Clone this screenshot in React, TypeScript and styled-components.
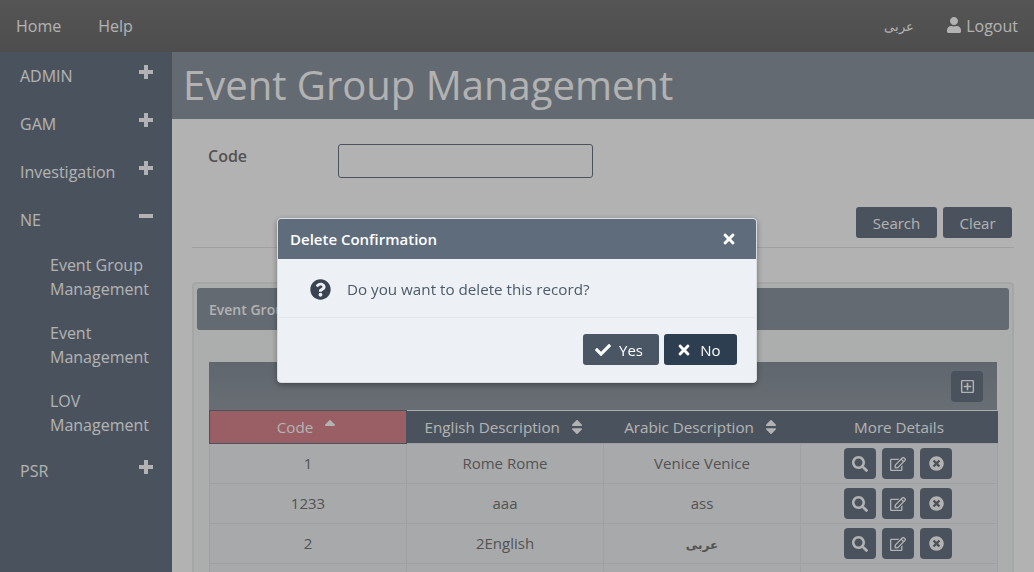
import styled, { createGlobalStyle } from 'styled-components';
import {
  FaCheck,
  FaQuestionCircle,
  FaRegEdit,
  FaRegPlusSquare,
  FaSearch,
  FaSort,
  FaSortUp,
  FaTimes,
  FaTimesCircle,
  FaUser,
} from 'react-icons/fa';

const GlobalStyle = createGlobalStyle`
  html, body {
    margin: 0;
    height: 572px;
    overflow: hidden;
    background: #fff;
    font-family: "Open Sans", "Noto Sans", sans-serif;
  }
  * { box-sizing: border-box; }
`;

const Page = styled.div`
  width: 1034px;
  height: 572px;
  overflow: hidden;
  display: flex;
  flex-direction: column;
`;

// Top bar
//
const TopBar = styled.header`
  flex: none;
  height: 52px;
  display: flex;
  align-items: center;
  justify-content: space-between;
  padding: 0 16px;
  background: linear-gradient(#7a7a7a, #6f6f6f);
  color: #fff;
  font-size: 16px;
`;

const TopGroup = styled.nav<{ $gap: number }>`
  display: flex;
  align-items: center;
  gap: ${({ $gap }) => $gap}px;
`;

const ArabicLink = styled.span`
  font-family: "DejaVu Sans", sans-serif;
  font-size: 13px;
  font-weight: 300;
`;

const LogoutLink = styled.span`
  display: flex;
  align-items: center;
  gap: 4px;
  svg { font-size: 16px; margin-bottom: 3px; }
`;

const Body = styled.div`
  flex: 1;
  display: flex;
  min-height: 0;
`;

// Sidebar
//
const Sidebar = styled.aside`
  flex: none;
  width: 172px;
  background: #6b7786;
  color: #fff;
  font-size: 16px;
`;

const MenuItem = styled.div`
  height: 48px;
  display: flex;
  align-items: center;
  justify-content: space-between;
  padding: 0 19px 0 20px;
  svg { width: 14px; height: 14px; margin-bottom: 8px; }
`;

const SubMenu = styled.div`
  padding: 9px 0 10px 50px;
  display: flex;
  flex-direction: column;
  gap: 20px;
  line-height: 24px;
`;

const PlusIcon = () => (
  <svg viewBox="0 0 14 14" fill="currentColor">
    <path d="M5 0h4v5h5v4H9v5H5V9H0V5h5z" />
  </svg>
);

const MinusIcon = () => (
  <svg viewBox="0 0 14 14" fill="currentColor">
    <path d="M0 5h14v4H0z" />
  </svg>
);

// Main content
//
const Main = styled.main`
  flex: 1;
  min-width: 0;
  display: flex;
  flex-direction: column;
`;

const TitleBar = styled.h1`
  flex: none;
  margin: 0;
  height: 67px;
  padding: 0 0 2px 11px;
  display: flex;
  align-items: center;
  background: #8f99a4;
  color: #fff;
  font-size: 40px;
  font-weight: 400;
`;

const Content = styled.div`
  padding: 25px 20px 0;
  color: #777;
`;

const FormRow = styled.div`
  display: flex;
  align-items: flex-start;
  height: 63px;
  padding-left: 16px;
`;

const FieldLabel = styled.label`
  width: 130px;
  padding-top: 1px;
  font-size: 16px;
  font-weight: 600;
  line-height: 22px;
`;

const TextInput = styled.input`
  width: 255px;
  height: 34px;
  background: #fff;
  border: 1px solid #6b7786;
  border-radius: 3px;
`;

const ActionRow = styled.div`
  display: flex;
  justify-content: flex-end;
  gap: 6px;
  padding: 0 2px 9px 0;
  border-bottom: 1px solid #e6e6e6;
`;

const ActionButton = styled.button<{ $width: number }>`
  width: ${({ $width }) => $width}px;
  height: 31px;
  padding: 0;
  border: 0;
  border-radius: 3px;
  background: #6b7786;
  color: #fff;
  font: 400 15px "Open Sans", sans-serif;
`;

const Panel = styled.section`
  margin-top: 34px;
  padding: 4px 3px 0;
  height: 300px;
  background: #f7f8f8;
  border: 2px solid #eeeeee;
  border-radius: 4px;
`;

const PanelHeader = styled.div`
  height: 42px;
  display: flex;
  align-items: center;
  padding-left: 12px;
  border-radius: 3px;
  background: #8f99a4;
  color: #fff;
  font-size: 14px;
  font-weight: 600;
`;

const TableWrap = styled.div`
  margin: 32px 12px 0;
`;

const TableCaption = styled.div`
  height: 48px;
  display: flex;
  align-items: center;
  justify-content: flex-end;
  padding-right: 14px;
  background: linear-gradient(#8a939d, #969ea7);
`;

const IconButton = styled.button<{ $size: number }>`
  width: 32px;
  height: 31px;
  padding: 0;
  display: inline-flex;
  align-items: center;
  justify-content: center;
  border: 0;
  border-radius: 4px;
  background: #6b7786;
  color: #fff;
  font-size: ${({ $size }) => $size}px;
`;

const StyledTable = styled.table`
  width: 789px;
  table-layout: fixed;
  border-collapse: collapse;
`;

const HeaderCell = styled.th<{ $sorted?: boolean }>`
  height: 33px;
  padding: 0;
  background: ${({ $sorted }) => ($sorted ? '#dc8890' : '#6b7786')};
  border: ${({ $sorted }) => ($sorted ? '1px solid #6b7786' : '0')};
  color: #fff;
  font-size: 15.2px;
  font-weight: 400;
  svg { font-size: 18px; margin-left: 8px; vertical-align: -3px; }
`;

const Cell = styled.td`
  height: 40px;
  padding: 0 0 2px;
  background: #f1f3f5;
  border: 1px solid #e4e6e8;
  color: #777;
  font-size: 15px;
  text-align: center;
`;

const ActionCell = styled(Cell)`
  padding: 0;
`;

const ArabicCell = styled.span`
  font-family: "DejaVu Sans", sans-serif;
  font-size: 12px;
  font-weight: 700;
`;

const RowActions = styled.div`
  display: flex;
  justify-content: center;
  gap: 6px;
  padding-right: 2px;
`;

// Delete dialog
//
const Overlay = styled.div`
  position: fixed;
  inset: 0;
  background: rgba(0, 0, 0, 0.3);
  display: flex;
  justify-content: center;
  align-items: flex-start;
  padding-top: 218px;
`;

const Dialog = styled.div`
  width: 480px;
  height: 165px;
  padding: 1px;
  background: #edf0f4;
  border-radius: 4px;
  border: 1px solid #d8dde2;
  box-shadow: 0 2px 6px rgba(0, 0, 0, 0.35);
  overflow: hidden;
`;

const DialogHeader = styled.div`
  height: 40px;
  margin: -1px -1px 0;
  display: flex;
  align-items: center;
  justify-content: space-between;
  padding: 0 19px 0 12px;
  background: #5f6c7b;
  color: #fff;
  font-size: 15px;
  font-weight: 600;
  svg { font-size: 16px; }
`;

const DialogBody = styled.div`
  height: 59px;
  display: flex;
  align-items: center;
  gap: 16px;
  padding: 2px 0 0 31px;
  border-bottom: 1px solid #e3e6ea;
  color: #4d5a69;
  font-size: 15.2px;
  svg { font-size: 21px; color: #3a4350; }
`;

const DialogFooter = styled.div`
  display: flex;
  justify-content: flex-end;
  gap: 5px;
  padding: 16px 18px 0 0;
`;

const DialogButton = styled.button<{ $dark?: boolean; $width: number }>`
  width: ${({ $width }) => $width}px;
  height: 31px;
  padding: 0 4px 0 0;
  display: flex;
  align-items: center;
  justify-content: center;
  gap: 8px;
  border: 0;
  border-radius: 3px;
  background: ${({ $dark }) => ($dark ? '#2c3e50' : '#4a5664')};
  color: #fff;
  font: 400 15px "Open Sans", sans-serif;
  svg { font-size: 16px; }
`;

const rows = [
  { code: '1', english: 'Rome Rome', arabic: 'Venice Venice' },
  { code: '1233', english: 'aaa', arabic: 'ass' },
  { code: '2', english: '2English', arabic: 'عربى' },
];

const App = () => (
  <Page>
    <GlobalStyle />
    <TopBar>
      <TopGroup $gap={37}>
        <span>Home</span>
        <span>Help</span>
      </TopGroup>
      <TopGroup $gap={32}>
        <ArabicLink>عربى</ArabicLink>
        <LogoutLink>
          <FaUser />
          Logout
        </LogoutLink>
      </TopGroup>
    </TopBar>
    <Body>
      <Sidebar>
        <MenuItem>ADMIN<PlusIcon /></MenuItem>
        <MenuItem>GAM<PlusIcon /></MenuItem>
        <MenuItem>Investigation<PlusIcon /></MenuItem>
        <MenuItem>NE<MinusIcon /></MenuItem>
        <SubMenu>
          <span>Event Group<br />Management</span>
          <span>Event<br />Management</span>
          <span>LOV<br />Management</span>
        </SubMenu>
        <MenuItem>PSR<PlusIcon /></MenuItem>
      </Sidebar>
      <Main>
        <TitleBar>Event Group Management</TitleBar>
        <Content>
          <FormRow>
            <FieldLabel>Code</FieldLabel>
            <TextInput />
          </FormRow>
          <ActionRow>
            <ActionButton $width={81}>Search</ActionButton>
            <ActionButton $width={69}>Clear</ActionButton>
          </ActionRow>
          <Panel>
            <PanelHeader>Event Group Management</PanelHeader>
            <TableWrap>
              <TableCaption>
                <IconButton $size={15}><FaRegPlusSquare /></IconButton>
              </TableCaption>
              <StyledTable>
                <thead>
                  <tr>
                    <HeaderCell $sorted>Code<FaSortUp /></HeaderCell>
                    <HeaderCell>English Description<FaSort /></HeaderCell>
                    <HeaderCell>Arabic Description<FaSort /></HeaderCell>
                    <HeaderCell>More Details</HeaderCell>
                  </tr>
                </thead>
                <tbody>
                  {rows.map((row) => (
                    <tr key={row.code}>
                      <Cell>{row.code}</Cell>
                      <Cell>{row.english}</Cell>
                      <Cell>
                        {row.arabic === 'عربى' ? <ArabicCell>{row.arabic}</ArabicCell> : row.arabic}
                      </Cell>
                      <ActionCell>
                        <RowActions>
                          <IconButton $size={16}><FaSearch /></IconButton>
                          <IconButton $size={16}><FaRegEdit /></IconButton>
                          <IconButton $size={15}><FaTimesCircle /></IconButton>
                        </RowActions>
                      </ActionCell>
                    </tr>
                  ))}
                  <tr>
                    <Cell />
                    <Cell />
                    <Cell />
                    <Cell />
                  </tr>
                </tbody>
              </StyledTable>
            </TableWrap>
          </Panel>
        </Content>
      </Main>
    </Body>
    <Overlay>
      <Dialog>
        <DialogHeader>
          Delete Confirmation
          <FaTimes />
        </DialogHeader>
        <DialogBody>
          <FaQuestionCircle />
          Do you want to delete this record?
        </DialogBody>
        <DialogFooter>
          <DialogButton $width={76}><FaCheck />Yes</DialogButton>
          <DialogButton $dark $width={73}><FaTimes />No</DialogButton>
        </DialogFooter>
      </Dialog>
    </Overlay>
  </Page>
);

export default App;
